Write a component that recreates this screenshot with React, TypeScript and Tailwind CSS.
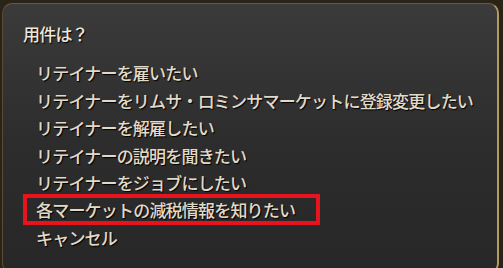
const items = [
  'リテイナーを雇いたい',
  'リテイナーをリムサ・ロミンサマーケットに登録変更したい',
  'リテイナーを解雇したい',
  'リテイナーの説明を聞きたい',
  'リテイナーをジョブにしたい',
  '各マーケットの減税情報を知りたい',
  'キャンセル',
];

export default function App() {
  return (
    <div
      className="w-[503px] h-[268px] bg-[#2a2318] pt-[3px] pl-[2px] pr-[4px] overflow-hidden"
      style={{ fontFamily: '"Noto Sans CJK JP", "Noto Sans", sans-serif' }}
    >
      <div className="h-[270px] rounded-[10px] border border-[#5a4c33] border-r-2 border-r-[#b39a5e] border-t-[#6a5a3c] bg-gradient-to-b from-[#3b3b3b] via-[#2d2d2d] to-[#272727] pt-[19px]">
        <div className="pl-[20px] text-[17px] leading-[22px] tracking-[-0.8px] font-medium text-[#ece7dd] [text-shadow:1px_1px_1px_#000]">
          用件は？
        </div>
        <ul className="mt-[14px] pl-[33px] text-[17px] leading-[27.5px] tracking-[-0.8px] font-medium text-[#e2dac8] [text-shadow:1px_1px_1px_#000]">
          {items.map((t, i) =>
            i === 5 ? (
              <li
                key={t}
                className="-ml-[13px] w-[297px] border-4 border-[#e8141d] pl-[9px] leading-[23px] -mt-[2.5px] -mb-[1px]"
              >
                {t}
              </li>
            ) : (
              <li key={t}>{t}</li>
            )
          )}
        </ul>
      </div>
    </div>
  );
}
